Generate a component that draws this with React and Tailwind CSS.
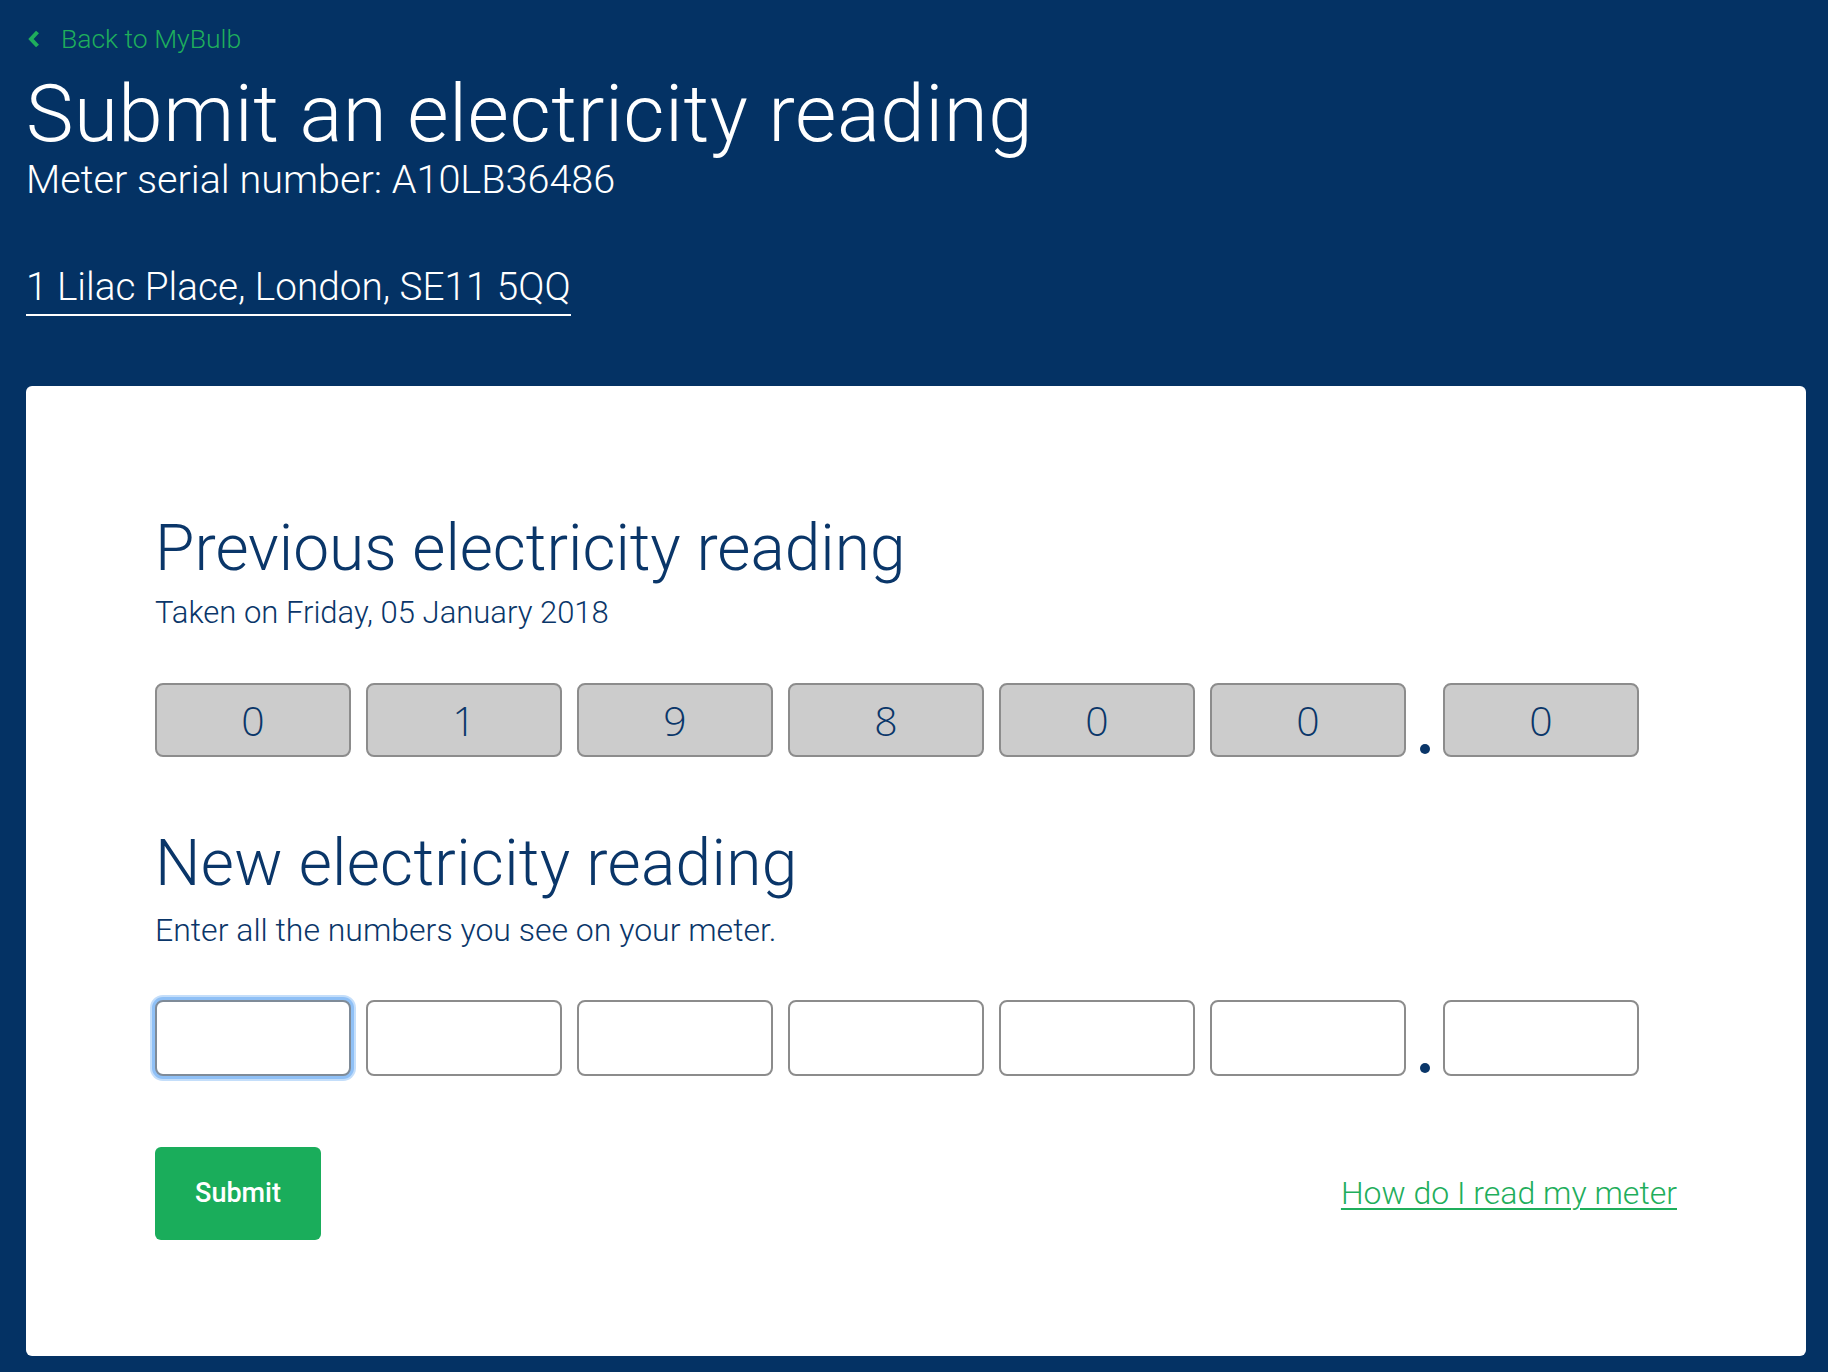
import React from 'react';

const previous = ['0', '1', '9', '8', '0', '0'];

const DigitBox = ({ value }) => (
  <div className="w-[196px] h-[74px] rounded-[8px] border-2 border-[#8c8c8c] bg-[#cccccc] flex items-center justify-center pt-[2px] text-[41px] leading-none text-[#0a3669] font-light font-['Open_Sans',sans-serif]">
    {value}
  </div>
);

const InputBox = ({ focused }) => (
  <input
    type="text"
    inputMode="numeric"
    maxLength={1}
    className={`w-[196px] h-[76px] rounded-[8px] border-2 bg-white outline-none text-center text-[40px] text-[#0a3669] font-['Open_Sans',sans-serif] ${
      focused ? 'border-[#7f8b98] shadow-[0_0_0_3px_#8fc0f6,0_0_0_5px_#c4defa]' : 'border-[#8c8c8c]'
    }`}
  />
);

const Dot = ({ h }) => (
  <div className={`w-[37px] flex items-end justify-center pb-[3px] ${h}`}>
    <div className="w-[10px] h-[10px] rounded-full bg-[#0a3669]" />
  </div>
);

export default function App() {
  return (
    <div className="min-h-screen bg-[#043264] pl-[26px] pr-[22px] pt-[26px] pb-[16px] font-['Roboto',sans-serif] text-white">
      {/* Header */}
      <a href="#" className="flex items-center gap-[20px] text-[26.5px] leading-none text-[#1fae5c] font-light">
        <svg width="14" height="20" viewBox="0 0 14 20" className="ml-[1px]">
          <path d="M10.5 3 L4 10 L10.5 17" fill="none" stroke="#1fae5c" strokeWidth="4" />
        </svg>
        Back to MyBulb
      </a>
      <h1 className="mt-[21px] text-[80px] leading-none font-light tracking-[0.5px]">Submit an electricity reading</h1>
      <p className="mt-[6px] text-[39.6px] leading-none font-light">Meter serial number: A10LB36486</p>
      <div className="mt-[69px]">
        <span className="inline-block text-[38.7px] leading-none font-light pb-[7px] border-b-2 border-white">
          1 Lilac Place, London, SE11 5QQ
        </span>
      </div>

      {/* Card */}
      <div className="mt-[70px] bg-white rounded-[6px] pl-[129px] pr-[129px] pt-[131px] pb-[116px] text-[#0a3669]">
        <h2 className="text-[64px] leading-none font-light">Previous electricity reading</h2>
        <p className="mt-[16px] text-[31px] leading-none font-light">Taken on Friday, 05 January 2018</p>
        <div className="mt-[55px] flex">
          <div className="flex gap-[15px]">
            {previous.map((d, i) => (
              <DigitBox key={i} value={d} />
            ))}
          </div>
          <Dot h="h-[74px]" />
          <DigitBox value="0" />
        </div>

        <h2 className="mt-[75px] text-[64px] leading-none font-light tracking-[0.3px]">New electricity reading</h2>
        <p className="mt-[18px] text-[32px] leading-none font-light">Enter all the numbers you see on your meter.</p>
        <div className="mt-[54px] flex">
          <div className="flex gap-[15px]">
            {[0, 1, 2, 3, 4, 5].map((i) => (
              <InputBox key={i} focused={i === 0} />
            ))}
          </div>
          <Dot h="h-[76px]" />
          <InputBox />
        </div>

        <div className="mt-[71px] flex items-center justify-between">
          <button className="w-[166px] h-[93px] rounded-[6px] bg-[#1aad5b] text-white text-[27px] font-medium">
            Submit
          </button>
          <a href="#" className="text-[32px] leading-none font-light text-[#1fae5c] underline underline-offset-[4px] decoration-2">
            How do I read my meter
          </a>
        </div>
      </div>
    </div>
  );
}
